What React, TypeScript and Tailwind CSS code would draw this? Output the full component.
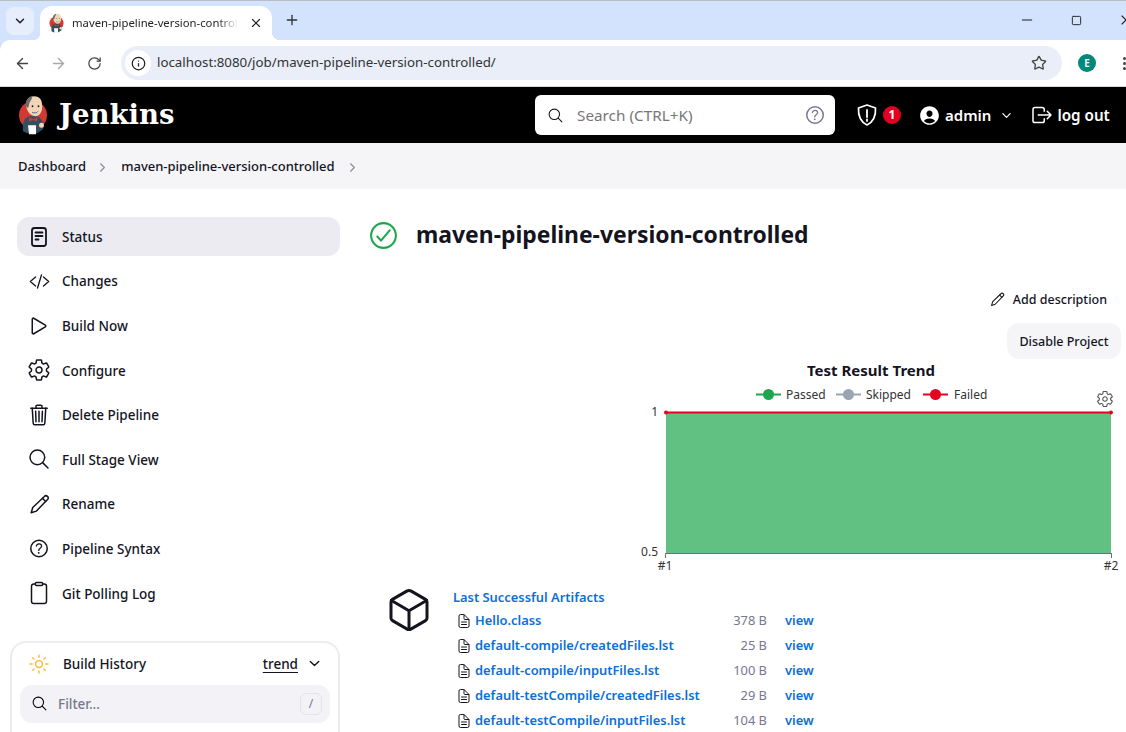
import { ArrowLeft, ArrowRight, ChevronDown, ChevronRight, Info, Minus, Plus, RotateCw, Square, Star, X } from "lucide-react";
import {
  IoCheckmarkCircleOutline,
  IoChevronDown,
  IoClipboardOutline,
  IoCodeSlashOutline,
  IoCubeOutline,
  IoDocumentTextOutline,
  IoHelpCircleOutline,
  IoLogOutOutline,
  IoPersonCircle,
  IoPlayOutline,
  IoSearchOutline,
  IoSettingsOutline,
  IoSunnyOutline,
  IoTrashOutline,
} from "react-icons/io5";

const artifacts = [
  { name: "Hello.class", size: "378 B" },
  { name: "default-compile/createdFiles.lst", size: "25 B" },
  { name: "default-compile/inputFiles.lst", size: "100 B" },
  { name: "default-testCompile/createdFiles.lst", size: "29 B" },
  { name: "default-testCompile/inputFiles.lst", size: "104 B" },
];

function StatusIcon() {
  return (
    <svg width="24" height="24" viewBox="0 0 24 24" fill="none" stroke="currentColor" strokeWidth="1.8" strokeLinecap="round">
      <rect x="5" y="3" width="14" height="18" rx="2.5" />
      <path d="M8.5 7.5h7M8.5 11h7M8.5 14.5h3" />
    </svg>
  );
}

function PencilIcon({ size }: { size: number }) {
  return (
    <svg width={size} height={size} viewBox="0 0 24 24" fill="none" stroke="currentColor" strokeWidth="1.7" strokeLinejoin="round" strokeLinecap="round">
      <path d="M2.500 21.500l1.800-6L17.500 2.800a2.400 2.400 0 0 1 3.700 3.500L8.300 19.600z" />
      <path d="M15.500 5l3.600 3.500" />
    </svg>
  );
}

const menu = [
  { label: "Status", icon: <StatusIcon />, active: true },
  { label: "Changes", icon: <IoCodeSlashOutline size={21} /> },
  { label: "Build Now", icon: <IoPlayOutline size={24} /> },
  { label: "Configure", icon: <IoSettingsOutline size={24} /> },
  { label: "Delete Pipeline", icon: <IoTrashOutline size={24} /> },
  { label: "Full Stage View", icon: <IoSearchOutline size={24} /> },
  { label: "Rename", icon: <PencilIcon size={21} /> },
  { label: "Pipeline Syntax", icon: <IoHelpCircleOutline size={25} /> },
  { label: "Git Polling Log", icon: <IoClipboardOutline size={24} /> },
];

// rough drawing of the Jenkins butler
function Butler({ size }: { size: number }) {
  return (
    <svg width={size} height={size * 1.35} viewBox="0 0 30 40">
      <circle cx="15" cy="20" r="14" fill="#d33833" />
      <path d="M5 36c-1-8 1-13 6-15l8 0c5 2 7 6 6 13l-6 4H9z" fill="#335061" />
      <path d="M8 10c0-6 3-9 8-9s8 3 8 8c1 5-1 11-6 12-5 0-9-4-10-11z" fill="#f0d6b7" />
      <path d="M8 11c-1-5 2-9 6-10 1 3-3 5-3 9l-1 3z" fill="#6d6b6d" />
      <circle cx="14.500" cy="11" r="0.900" fill="#1d1d1d" />
      <circle cx="20.500" cy="11" r="0.900" fill="#1d1d1d" />
      <path d="M14 17c2 1 5 1 6-1" stroke="#49728b" strokeWidth="1" fill="none" />
      <path d="M11 22l4 2 5-2-1 4-4-1-4 1z" fill="#d33833" />
      <path d="M10 30h8v9h-7z" fill="#fff" />
      <circle cx="23.500" cy="30" r="2.500" fill="#f0d6b7" />
    </svg>
  );
}

function TrendChart() {
  return (
    <svg width="486" height="215" viewBox="640 360 486 215" className="block font-['Noto_Sans',sans-serif]">
      <text x="871" y="376" textAnchor="middle" fontSize="15" fontWeight="700" fill="#14141f">Test Result Trend</text>

      <path d="M756 394.500h25" stroke="#1ea64e" strokeWidth="2" />
      <circle cx="768.500" cy="394.500" r="5.500" fill="#1ea64e" />
      <text x="786" y="399" fontSize="12" fill="#333">Passed</text>
      <path d="M836 394.500h25" stroke="#9aa5b1" strokeWidth="2" />
      <circle cx="848.500" cy="394.500" r="5.500" fill="#9aa5b1" />
      <text x="866" y="399" fontSize="12" fill="#333">Skipped</text>
      <path d="M923 394.500h25" stroke="#e6001f" strokeWidth="2" />
      <circle cx="935.500" cy="394.500" r="5.500" fill="#e6001f" />
      <text x="954" y="399" fontSize="12" fill="#333">Failed</text>

      <text x="658" y="416" textAnchor="end" fontSize="12" fill="#333">1</text>
      <text x="658" y="556" textAnchor="end" fontSize="12" fill="#333">0.5</text>

      <rect x="666" y="413" width="445" height="140" fill="#61c182" />
      <path d="M665.500 553.500h446M665.500 553v5M1111.500 553v5" stroke="#6e7079" strokeWidth="1" fill="none" />
      <path d="M666 412.500h445" stroke="#e6001f" strokeWidth="2" />
      <circle cx="666" cy="412.500" r="2" fill="#e6001f" />
      <circle cx="1111" cy="412.500" r="2" fill="#e6001f" />

      <text x="665" y="570" textAnchor="middle" fontSize="12" fill="#333">#1</text>
      <text x="1111" y="570" textAnchor="middle" fontSize="12" fill="#333">#2</text>
    </svg>
  );
}

function BrowserBar() {
  return (
    <div className="bg-[#d3e3fd] font-['Noto_Sans',sans-serif] text-[#1f1f1f]">
      <div className="h-[40px] border-t border-[#b9bdc4] flex items-end pl-[6px]">
        <div className="w-[28px] h-[28px] mb-[5px] rounded-lg bg-[#e6eefc] flex items-center justify-center">
          <ChevronDown size={14} strokeWidth={2.5} />
        </div>
        <div className="w-[6px] h-[6px] bg-[radial-gradient(circle_at_top_left,transparent_6px,white_6px)]" />
        <div className="w-[232px] h-[34px] bg-white rounded-t-xl flex items-center pl-[9px] pr-[9px]">
          <Butler size={15} />
          <span className="ml-[8px] w-[166px] overflow-hidden whitespace-nowrap text-[11.300px] [mask-image:linear-gradient(to_right,black_88%,transparent)]">
            maven-pipeline-version-controlled
          </span>
          <X size={14} strokeWidth={2} className="ml-auto" />
        </div>
        <div className="w-[8px] h-[8px] bg-[radial-gradient(circle_at_top_right,transparent_8px,white_8px)]" />
        <Plus size={16} className="ml-[4px] mb-[12px] text-[#333]" strokeWidth={2} />
        <div className="ml-auto flex items-center mb-[12px]">
          <Minus size={16} strokeWidth={1.6} />
          <Square size={11} strokeWidth={2} className="ml-[36px]" />
          <X size={16} strokeWidth={1.6} className="ml-[36px] -mr-[8px]" />
        </div>
      </div>
      <div className="h-[47px] bg-white rounded-tl-[10px] border-b border-[#d9d9d9] flex items-center pl-[14px]">
        <ArrowLeft size={17} strokeWidth={2} className="text-[#444]" />
        <ArrowRight size={17} strokeWidth={2} className="ml-[19px] text-[#a8a8a8]" />
        <RotateCw size={15} strokeWidth={2} className="ml-[20px] text-[#444]" />
        <div className="ml-[19px] w-[941px] h-[34px] rounded-full bg-[#e9eef8] flex items-center pl-[4px] pr-[15px]">
          <div className="w-[26px] h-[26px] rounded-full bg-white flex items-center justify-center">
            <Info size={15} strokeWidth={2} />
          </div>
          <span className="ml-[6px] text-[13.300px] text-[#333]">localhost:8080/job/maven-pipeline-version-controlled/</span>
          <Star size={16} strokeWidth={2} className="ml-auto text-[#444]" />
        </div>
        <div className="ml-[16px] w-[18px] h-[18px] rounded-full bg-[#00897b] text-white text-[10px] font-semibold flex items-center justify-center">E</div>
        <div className="ml-[27px] flex flex-col gap-[2px]">
          <span className="w-[3px] h-[3px] rounded-full bg-[#444]" />
          <span className="w-[3px] h-[3px] rounded-full bg-[#444]" />
          <span className="w-[3px] h-[3px] rounded-full bg-[#444]" />
        </div>
      </div>
    </div>
  );
}

function Header() {
  return (
    <header className="h-[56px] bg-black text-white flex items-center pl-[18px]">
      <div className="w-[517px] flex items-center">
        <Butler size={30} />
        <span className="ml-[11px] font-['DejaVu_Serif',serif] font-bold text-[27.500px] leading-none">Jenkins</span>
      </div>
      <div className="w-[300px] h-[40px] bg-white rounded-md flex items-center pl-[12px] pr-[8px] text-[#14141f]">
        <IoSearchOutline size={17} />
        <span className="ml-[13px] text-[15.300px] text-[#777]">Search (CTRL+K)</span>
        <IoHelpCircleOutline size={24} className="ml-auto text-[#77778f]" />
      </div>
      <svg width="22" height="24" viewBox="0 0 22 24" fill="none" className="ml-[21px]">
        <path d="M11 2l8.500 3c.5 8-1.500 13.500-8.500 17C4 18.500 2 13 2.500 5z" stroke="white" strokeWidth="1.700" strokeLinejoin="round" />
        <path d="M11 7v7M11 16.500v1.500" stroke="white" strokeWidth="1.800" strokeLinecap="round" />
      </svg>
      <span className="ml-[5px] w-[18px] h-[18px] rounded-full bg-[#e6001f] text-[12px] font-bold flex items-center justify-center">1</span>
      <IoPersonCircle size={23} className="ml-[17px]" />
      <span className="ml-[4px] text-[15px] font-semibold">admin</span>
      <IoChevronDown size={13} className="ml-[9px]" />
      <IoLogOutOutline size={24} className="ml-[17px]" />
      <span className="ml-[3px] text-[15.200px] font-semibold">log out</span>
    </header>
  );
}

function Sidebar() {
  return (
    <aside className="w-[340px] shrink-0 pl-[10px] pt-[28px]">
      <nav className="pl-[7px] flex flex-col gap-[5.600px]">
        {menu.map((item) => (
          <div
            key={item.label}
            className={`h-[39px] rounded-xl flex items-center pl-[10px] text-[13.500px] font-medium text-[#14141f] ${item.active ? "bg-[#ebebf1]" : ""}`}
          >
            <span className="w-[24px] flex justify-center">{item.icon}</span>
            <span className="ml-[11px] pt-[1px]">{item.label}</span>
          </div>
        ))}
      </nav>
      <section className="mt-[28px] h-[120px] border-2 border-[#ebebf2] rounded-2xl px-[8px]">
        <div className="h-[42px] flex items-center pl-[8px] pr-[8px] text-[13.500px] font-medium text-[#14141f]">
          <IoSunnyOutline size={22} className="text-[#fdb62b]" />
          <span className="ml-[13px]">Build History</span>
          <span className="ml-auto underline underline-offset-3">trend</span>
          <IoChevronDown size={15} className="ml-[9px]" />
        </div>
        <div className="h-[38px] rounded-xl bg-[#f2f2f7] flex items-center pl-[11px] pr-[8px]">
          <IoSearchOutline size={17} />
          <span className="ml-[10px] text-[13.500px] font-medium text-[#77778f]">Filter...</span>
          <span className="ml-auto w-[22px] h-[22px] rounded-md border border-[#e3e3ea] text-[12px] text-[#77778f] flex items-center justify-center">/</span>
        </div>
      </section>
    </aside>
  );
}

function MainPanel() {
  return (
    <main className="flex-1 pl-[29px] pr-[5px] pt-[28px] flex flex-col text-[#14141f]">
      <div className="h-[37px] flex items-center">
        <IoCheckmarkCircleOutline size={33} className="text-[#1ea64e] -ml-[2px]" />
        <h1 className="ml-[16px] text-[22.900px] font-bold leading-none">maven-pipeline-version-controlled</h1>
      </div>
      <div className="mt-[35px] h-[20px] self-end mr-[14px] flex items-center text-[12.500px] font-medium">
        <PencilIcon size={15} />
        <span className="ml-[8px] pt-[2px]">Add description</span>
      </div>
      <div className="mt-[14px] self-end h-[36px] w-[114px] pt-[2px] rounded-xl bg-[#f5f5f8] text-[12.500px] font-medium flex items-center justify-center">
        Disable Project
      </div>
      <div className="relative self-end -mr-[5px] mt-px">
        <TrendChart />
        <IoSettingsOutline size={18} className="absolute left-[456px] top-[30px] text-[#555]" />
      </div>
      <div className="mt-[13px] pl-[18px] flex">
        <IoCubeOutline size={48} className="shrink-0 -ml-[2px] -mt-[2px]" />
        <div className="ml-[20px] text-[12.900px]">
          <div className="h-[19px] flex items-center font-semibold text-[#0b6fd8]">Last Successful Artifacts</div>
          <div className="mt-[1px]">
            {artifacts.map((a) => (
              <div key={a.name} className="h-[25px] flex items-center pl-[3px]">
                <IoDocumentTextOutline size={16} className="shrink-0" />
                <span className="ml-[3px] w-[250px] font-semibold text-[#0b6fd8] whitespace-nowrap">{a.name}</span>
                <span className="w-[42px] text-right text-[#77778f]">{a.size}</span>
                <span className="ml-[18px] font-semibold text-[#0b6fd8]">view</span>
              </div>
            ))}
          </div>
        </div>
      </div>
    </main>
  );
}

export default function App() {
  return (
    <div className="w-[1126px] h-[732px] overflow-hidden bg-white font-['Noto_Sans',sans-serif]">
      <BrowserBar />
      <Header />
      <div className="h-[46px] bg-[#f5f5f8] flex items-center pl-[18px] pt-[2px] text-[13px] font-medium text-[#14141f]">
        <span>Dashboard</span>
        <ChevronRight size={15} strokeWidth={1.8} className="ml-[9px] text-[#8a8a9a]" />
        <span className="ml-[11px]">maven-pipeline-version-controlled</span>
        <ChevronRight size={15} strokeWidth={1.8} className="ml-[10px] text-[#8a8a9a]" />
      </div>
      <div className="flex">
        <Sidebar />
        <MainPanel />
      </div>
    </div>
  );
}
